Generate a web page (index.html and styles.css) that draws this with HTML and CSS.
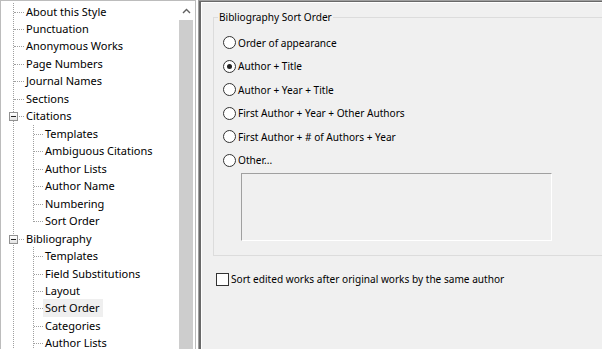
FILE: index.html
```html
<!DOCTYPE html>
<html>
<head>
<meta charset="utf-8">
<link rel="stylesheet" href="styles.css">
</head>
<body>
<div class="app">
  <div class="left">
    <div class="tree">
      <ul class="lvl0">
        <li class="row">About this Style</li>
        <li class="row">Punctuation</li>
        <li class="row">Anonymous Works</li>
        <li class="row">Page Numbers</li>
        <li class="row">Journal Names</li>
        <li class="row">Sections</li>
        <li class="row parent"><span class="exp"></span>Citations</li>
        <li class="kids">
          <ul class="lvl1">
            <li class="row">Templates</li>
            <li class="row">Ambiguous Citations</li>
            <li class="row">Author Lists</li>
            <li class="row">Author Name</li>
            <li class="row">Numbering</li>
            <li class="row last">Sort Order</li>
          </ul>
        </li>
        <li class="row parent"><span class="exp"></span>Bibliography</li>
        <li class="kids">
          <ul class="lvl1">
            <li class="row">Templates</li>
            <li class="row">Field Substitutions</li>
            <li class="row">Layout</li>
            <li class="row"><span class="sel">Sort Order</span></li>
            <li class="row">Categories</li>
            <li class="row">Author Lists</li>
          </ul>
        </li>
      </ul>
    </div>
    <div class="scroll">
      <div class="arrow"><svg width="9" height="6" viewBox="0 0 9 6"><path d="M1 5 L4.5 1.5 L8 5" fill="none" stroke="#606060" stroke-width="1.4"/></svg></div>
      <div class="thumb"></div>
    </div>
  </div>
  <div class="split"></div>
  <div class="right">
    <div class="inner">
      <fieldset class="group">
        <legend class="legend">Bibliography Sort Order</legend>
        <div class="radios">
          <label class="opt"><span class="radio"></span>Order of appearance</label>
          <label class="opt"><span class="radio on"></span>Author + Title</label>
          <label class="opt"><span class="radio"></span>Author + Year + Title</label>
          <label class="opt"><span class="radio"></span>First Author + Year + Other Authors</label>
          <label class="opt"><span class="radio"></span>First Author + # of Authors + Year</label>
          <label class="opt"><span class="radio"></span>Other...</label>
        </div>
        <div class="other"></div>
      </fieldset>
      <label class="check"><span class="box"></span>Sort edited works after original works by the same author</label>
    </div>
  </div>
</div>
</body>
</html>
```

FILE: styles.css
```css
html, body {
  margin: 0;
  padding: 0;
  width: 602px;
  height: 349px;
  overflow: hidden;
  background: #ffffff;
  font-family: "Noto Sans", "DejaVu Sans", sans-serif;
  font-size: 11px;
  color: #000;
}
.app {
  display: flex;
  height: 349px;
}
.left {
  width: 196px;
  box-sizing: border-box;
  border: 1px solid #bcbcbc;
  border-bottom: none;
  display: flex;
  background: #fff;
}
.tree {
  flex: 1;
  overflow: hidden;
  padding-top: 1.5px;
}
ul {
  list-style: none;
  margin: 0;
  padding: 0;
}
.lvl0 {
  margin-left: 12px;
  border-left: 1px dotted #a0a0a0;
}
.lvl1 {
  margin-left: 19px;
  border-left: 1px dotted #a0a0a0;
}
.row {
  position: relative;
  height: 17.47px;
  line-height: 17.47px;
  padding-left: 12px;
  white-space: nowrap;
}
.row::before {
  content: "";
  position: absolute;
  left: 0;
  top: 9px;
  width: 10px;
  border-top: 1px dotted #a0a0a0;
}
.lvl1 .row::before {
  width: 9px;
}
.lvl1 .row {
  padding-left: 11px;
}
.row.last::after {
  content: "";
  position: absolute;
  left: -1px;
  top: 10px;
  width: 1px;
  bottom: 0;
  background: #fff;
}
.exp {
  position: absolute;
  left: -5px;
  top: 5px;
  width: 7px;
  height: 7px;
  border: 1px solid #919191;
  background: linear-gradient(#ffffff, #e3e3e3);
  z-index: 1;
}
.exp::after {
  content: "";
  position: absolute;
  left: 1px;
  top: 3px;
  width: 5px;
  height: 1px;
  background: #202020;
}
.sel {
  background: #efefef;
  display: inline-block;
  margin-left: -2px;
  padding: 0 3px 0 2px;
}
.scroll {
  width: 17px;
  display: flex;
  flex-direction: column;
  background: #fff;
}
.arrow {
  height: 19px;
  display: flex;
  align-items: center;
  justify-content: center;
}
.thumb {
  flex: 1;
  margin: 0 2px 0 1px;
  background: #cdcdcd;
}
.split {
  width: 2px;
  background: #fff;
}
.right {
  flex: 1;
  border-left: 1px solid #a0a0a0;
  border-top: 1px solid #a0a0a0;
  overflow: hidden;
  font-size: 10.1px;
}
.inner {
  height: 100%;
  border-left: 2px solid #696969;
  border-top: 1px solid #696969;
  box-shadow: inset 1px 1px 0 #ffffff;
  background: #f0f0f0;
  padding-left: 12px;
  padding-top: 8px;
  box-sizing: border-box;
}
.group {
  margin: 0;
  padding: 0;
  width: 500px;
  height: 246px;
  box-sizing: border-box;
  border: 1px solid #dcdcdc;
}
.legend {
  margin-left: 4px;
  padding: 0 1px;
  line-height: 14px;
}
.radios {
  padding-left: 9px;
  padding-top: 7px;
}
.opt {
  display: flex;
  align-items: center;
  height: 23.5px;
}
.radio {
  width: 11px;
  height: 11px;
  border: 1px solid #333;
  border-radius: 50%;
  background: #fff;
  margin-right: 2px;
  position: relative;
}
.radio.on::after {
  content: "";
  position: absolute;
  left: 3px;
  top: 3px;
  width: 5px;
  height: 5px;
  border-radius: 50%;
  background: #222;
}
.other {
  margin-left: 27px;
  margin-top: 1px;
  width: 311px;
  height: 68px;
  box-sizing: border-box;
  border: 1px solid;
  border-color: #a0a0a0 #ffffff #ffffff #a0a0a0;
  background: #f0f0f0;
}
.check {
  display: flex;
  align-items: center;
  margin-left: 3px;
  margin-top: 14px;
  height: 18px;
}
.box {
  width: 11px;
  height: 11px;
  border: 1px solid #333;
  background: #fff;
  margin-right: 2px;
}
```
